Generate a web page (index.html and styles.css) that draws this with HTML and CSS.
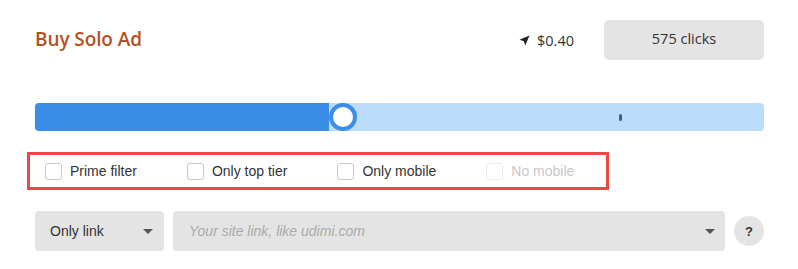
FILE: index.html
```html
<!DOCTYPE html>
<html>
<head>
<meta charset="utf-8">
<link rel="stylesheet" href="styles.css">
</head>
<body>
<div class="panel">
  <div class="header">
    <h1 class="title">Buy Solo Ad</h1>
    <div class="right">
      <div class="price">
        <svg class="arrow" width="11" height="11" viewBox="0 0 12 12"><path d="M11.5 0.5 L0.5 5.2 L5.3 6.7 L6.8 11.5 Z" fill="#222"/></svg>
        <span>$0.40</span>
      </div>
      <button class="clicks">575 clicks</button>
    </div>
  </div>

  <div class="slider">
    <div class="fill"></div>
    <div class="thumb"></div>
    <div class="rest"><span class="mark"></span></div>
  </div>

  <div class="filters">
    <label class="check"><span class="box"></span>Prime filter</label>
    <label class="check"><span class="box"></span>Only top tier</label>
    <label class="check"><span class="box"></span>Only mobile</label>
    <label class="check disabled"><span class="box"></span>No mobile</label>
  </div>

  <div class="linkrow">
    <div class="select"><span>Only link</span><span class="caret"></span></div>
    <div class="input"><span class="ph">Your site link, like udimi.com</span><span class="caret"></span></div>
    <div class="help">?</div>
  </div>
</div>
</body>
</html>
```

FILE: styles.css
```css
* { box-sizing: border-box; }
body {
  margin: 0;
  background: #fff;
  font-family: "Liberation Sans", Arial, sans-serif;
}
.panel {
  padding: 20px 34px 0 35px;
  width: 798px;
}
.header {
  display: flex;
  align-items: center;
  justify-content: space-between;
  height: 40px;
}
.title {
  margin: 0 0 2px 0;
  font-family: "Open Sans", sans-serif;
  font-weight: 600;
  font-size: 19px;
  color: #b5501f;
  letter-spacing: -0.1px;
}
.right {
  display: flex;
  align-items: center;
}
.price {
  display: flex;
  align-items: center;
  gap: 7px;
  font-family: "Open Sans", sans-serif;
  font-weight: 500;
  font-size: 14.5px;
  color: #333;
  margin-right: 30px;
}
.arrow { display: block; }
.clicks {
  width: 160px;
  height: 40px;
  border: none;
  border-radius: 5px;
  background: #e4e4e4;
  font-family: "Open Sans", sans-serif;
  font-weight: 500;
  font-size: 14.5px;
  color: #333;
  padding: 0;
  padding-bottom: 3px;
}
.slider {
  margin-top: 43px;
  height: 28px;
  display: flex;
  align-items: center;
  border-radius: 4px;
  background: #bbdcfb;
  width: 729px;
}
.fill {
  width: 294px;
  height: 28px;
  background: #3a8ee8;
  border-radius: 4px 0 0 4px;
}
.thumb {
  width: 28px;
  height: 28px;
  border-radius: 50%;
  background: #fff;
  border: 4px solid #3a8ee8;
  flex: none;
}
.rest {
  flex: 1;
  height: 28px;
  display: flex;
  align-items: center;
  padding-left: 262px;
}
.mark {
  width: 3px;
  height: 7px;
  border-radius: 2px;
  background: #3b5d9e;
}
.filters {
  margin-top: 21px;
  margin-left: -8px;
  width: 582px;
  height: 38px;
  border: 3px solid #e84848;
  display: flex;
  align-items: center;
  padding-left: 15px;
  gap: 50px;
}
.check {
  display: flex;
  align-items: center;
  font-size: 14px;
  color: #333;
}
.box {
  width: 17px;
  height: 17px;
  border: 1px solid #c8c8c8;
  border-radius: 3px;
  margin-right: 8px;
  background: #fff;
}
.check.disabled { color: #c8c8c8; }
.check.disabled .box { border-color: #ececec; }
.linkrow {
  margin-top: 21px;
  display: flex;
  align-items: center;
  gap: 9px;
  width: 729px;
}
.select, .input {
  height: 40px;
  border-radius: 4px;
  background: #e4e4e4;
  display: flex;
  align-items: center;
  justify-content: space-between;
  font-size: 14px;
  color: #333;
}
.select {
  width: 129px;
  padding: 0 11px 0 15px;
}
.input {
  flex: 1;
  padding: 0 10px 0 16px;
}
.ph {
  font-style: italic;
  color: #aaa;
}
.caret {
  width: 0;
  height: 0;
  border-left: 5px solid transparent;
  border-right: 5px solid transparent;
  border-top: 5px solid #555;
}
.help {
  width: 30px;
  height: 30px;
  border-radius: 50%;
  background: #e4e4e4;
  display: flex;
  align-items: center;
  justify-content: center;
  font-weight: bold;
  font-size: 13px;
  color: #333;
  flex: none;
}
```
